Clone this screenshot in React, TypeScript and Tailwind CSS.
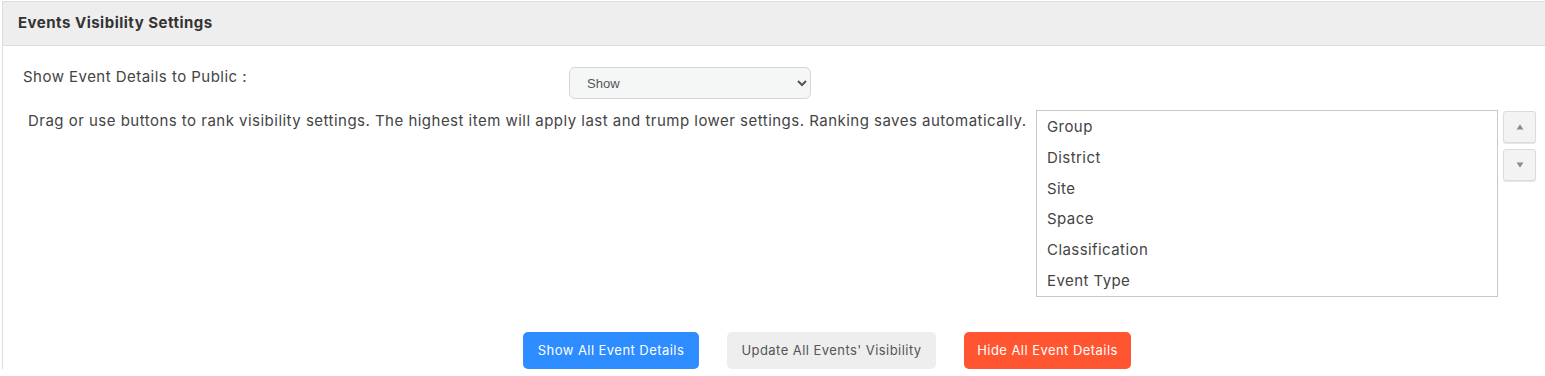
import React, { useState } from 'react'

const items = ['Group', 'District', 'Site', 'Space', 'Classification', 'Event Type']

const Arrow = ({ dir }: { dir: 'up' | 'down' }) => (
  <svg width="8" height="6" viewBox="0 0 8 6" className="text-[#8a8a8a]">
    {dir === 'up' ? <path d="M4 0.5L7.5 5.5H0.5Z" fill="currentColor" /> : <path d="M0.5 0.5H7.5L4 5.5Z" fill="currentColor" />}
  </svg>
)

export default function App() {
  const [visibility, setVisibility] = useState('Show')
  const [ranking, setRanking] = useState(items)

  return (
    <div className="min-h-[376px] bg-white font-['Inter',sans-serif] text-[#333333]">
      <div className="ml-[2px] mt-px border-l border-t border-[#dddddd]">
        {/* Panel header */}
        <div className="flex h-[44px] items-center border-b border-[#dddddd] bg-[#eeeeee] pl-[15px]">
          <h2 className="text-[15px] font-bold tracking-[0.5px] text-[#333333]">Events Visibility Settings</h2>
        </div>

        <div className="pt-[21px]">
          {/* Show to public */}
          <div className="flex items-start">
            <label className="w-[566px] pl-[20px] pt-px text-[15px] leading-[18px] tracking-[0.47px] text-[#444444]">
              Show Event Details to Public :
            </label>
            <select
              value={visibility}
              onChange={(e) => setVisibility(e.target.value)}
              className="h-[32px] w-[242px] rounded-[6px] border border-[#d6d6d6] bg-[#f5f6f6] pl-[13px] font-['Liberation_Sans',Arial,sans-serif] text-[13px] text-[#555555]"
            >
              <option>Show</option>
              <option>Hide</option>
            </select>
          </div>

          {/* Ranking */}
          <div className="mt-[11px] flex items-start">
            <p className="w-[1033px] pl-[25px] pt-[2px] text-[15px] leading-[18px] tracking-[0.48px] text-[#444444]">
              Drag or use buttons to rank visibility settings. The highest item will apply last and trump lower settings. Ranking saves automatically.
            </p>
            <ul className="h-[187px] w-[462px] border border-[#c8c8c8] bg-white pt-px">
              {ranking.map((item) => (
                <li key={item} className="h-[30.8px] pl-[10px] text-[15px] leading-[30.8px] tracking-[0.43px] text-[#444444]">
                  {item}
                </li>
              ))}
            </ul>
            <div className="ml-[5px] mt-px flex flex-col gap-[6px]">
              <button
                onClick={() => setRanking([...ranking])}
                className="flex h-[32px] w-[33px] items-center justify-center rounded-[3px] border border-[#dcdcdc] bg-[#f3f3f3] shadow-[0_1px_0_#e6e6e6]"
              >
                <Arrow dir="up" />
              </button>
              <button className="flex h-[32px] w-[33px] items-center justify-center rounded-[3px] border border-[#dcdcdc] bg-[#f3f3f3] shadow-[0_1px_0_#e6e6e6]">
                <Arrow dir="down" />
              </button>
            </div>
          </div>

          {/* Actions */}
          <div className="mt-[35px] flex gap-[28px] pl-[520px]">
            <button className="h-[37px] w-[176px] rounded-[5px] bg-[#2d8cff] text-[13px] tracking-[0.45px] text-white">Show All Event Details</button>
            <button className="h-[37px] w-[209px] rounded-[5px] bg-[#eeeeee] text-[13px] tracking-[0.45px] text-[#555555]">Update All Events' Visibility</button>
            <button className="h-[37px] w-[167px] rounded-[5px] bg-[#ff5530] text-[13px] tracking-[0.45px] text-white">Hide All Event Details</button>
          </div>
        </div>
      </div>
    </div>
  )
}
